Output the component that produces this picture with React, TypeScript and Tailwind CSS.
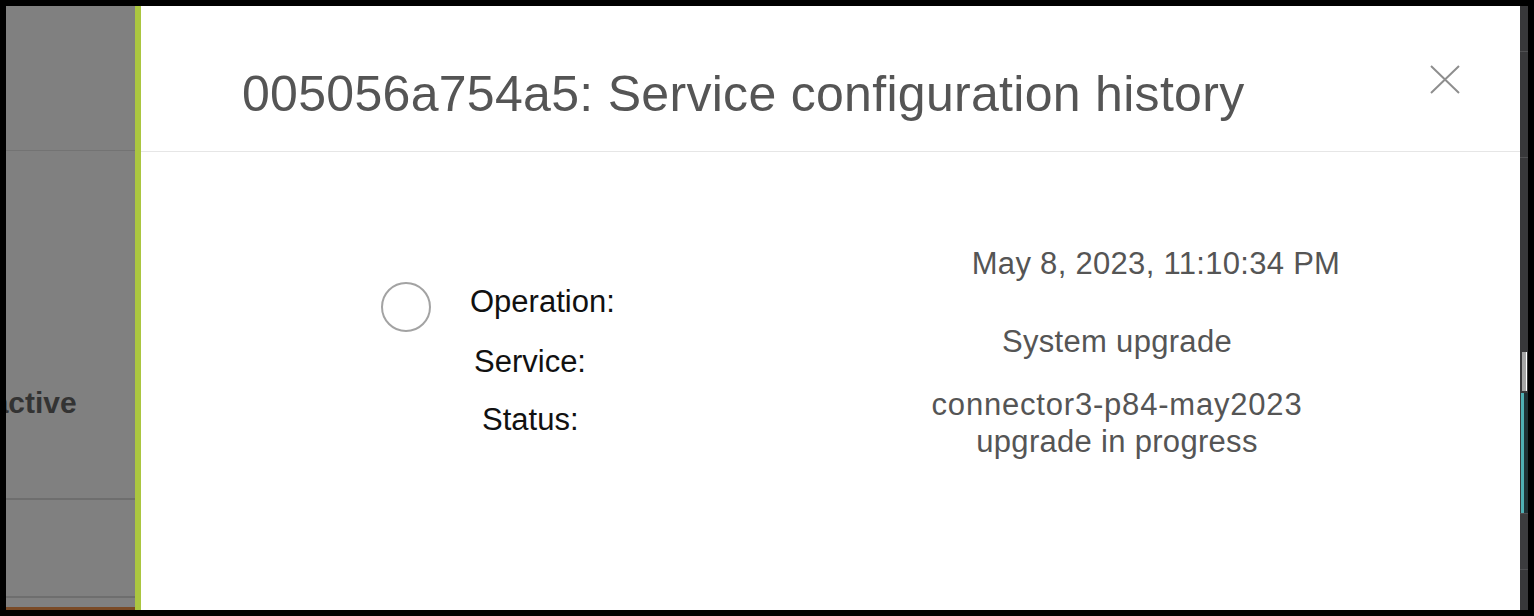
import React from 'react';

const font = { fontFamily: '"Liberation Sans", Arial, sans-serif' };

const App: React.FC = () => {
  return (
    <div className="w-[1534px] h-[616px] bg-black flex pt-[6px] pb-[6px] pl-[6px] pr-[6px] overflow-hidden" style={font}>
      {/* Background table under overlay */}
      <div className="w-[129px] h-full bg-[#808080] flex flex-col overflow-hidden">
        <div className="h-[145px] border-b border-[#737373]"></div>
        <div className="h-[349px] border-b-2 border-[#6e6e6e]">
          <div className="mt-[237px] ml-[-41px] whitespace-nowrap text-[30px] leading-none font-semibold text-[#333333]">
            Inactive
          </div>
        </div>
        <div className="h-[98px] border-b-2 border-[#6e6e6e]"></div>
        <div className="flex-1"></div>
        <div className="h-[3px] bg-[#7a4a26]"></div>
      </div>

      {/* Accent bar */}
      <div className="w-[6px] h-full bg-[#abc640]"></div>

      {/* Modal panel */}
      <div className="flex-1 h-full bg-white flex flex-col">
        <div className="h-[146px] border-b border-[#e6e6e6] flex justify-between pl-[101px] pr-[60px]">
          <h1 className="pt-[63px] text-[50px] leading-none tracking-[0.3px] text-[#555555] font-normal whitespace-nowrap">
            005056a754a5: Service configuration history
          </h1>
          <button className="mt-[59px] w-[30px] h-[30px] flex items-center justify-center">
            <svg width="30" height="30" viewBox="0 0 30 30" fill="none">
              <path d="M1 1 L29 28 M29 1 L1 28" stroke="#8e8e8e" strokeWidth="2" />
            </svg>
          </button>
        </div>

        <div className="flex-1 flex items-start">
          <div className="ml-[240px] mt-[130px] w-[50px] h-[50px] rounded-full border-2 border-[#a3a3a3]"></div>

          <div className="ml-[39px] w-[160px] flex flex-col items-start text-[31px] leading-none text-[#111111]">
            <div className="mt-[134px]">Operation:</div>
            <div className="mt-[29px] ml-[4px]">Service:</div>
            <div className="mt-[27px] ml-[12px]">Status:</div>
          </div>

          <div className="ml-[247px] w-[480px] flex flex-col text-center text-[31px] leading-none tracking-[0.3px] text-[#555555]">
            <div className="mt-[96px] pl-[78px] whitespace-nowrap">May 8, 2023, 11:10:34 PM</div>
            <div className="mt-[47px]">System upgrade</div>
            <div className="mt-[32px] tracking-[0.8px]">connector3-p84-may2023</div>
            <div className="mt-[6px]">upgrade in progress</div>
          </div>
        </div>
      </div>

      {/* Side strip */}
      <div className="w-[8px] h-full bg-[#38383a] flex flex-col">
        <div className="h-[46px] border-b border-[#505052]"></div>
        <div className="h-[106px] border-b border-[#505052]"></div>
        <div className="h-[194px]"></div>
        <div className="h-[39px] ml-[2px] w-[5px] bg-[#a6a6a6] border-r border-white"></div>
        <div className="h-[2px]"></div>
        <div className="h-[120px] flex">
          <div className="w-[3px] ml-[1px] bg-[#4fb0b4]"></div>
          <div className="flex-1 bg-[#1f3236]"></div>
        </div>
        <div className="h-[56px] border-t border-[#505052] bg-[#3c3c3e]"></div>
        <div className="flex-1 border-t border-[#505052]"></div>
      </div>
    </div>
  );
};

export default App;
